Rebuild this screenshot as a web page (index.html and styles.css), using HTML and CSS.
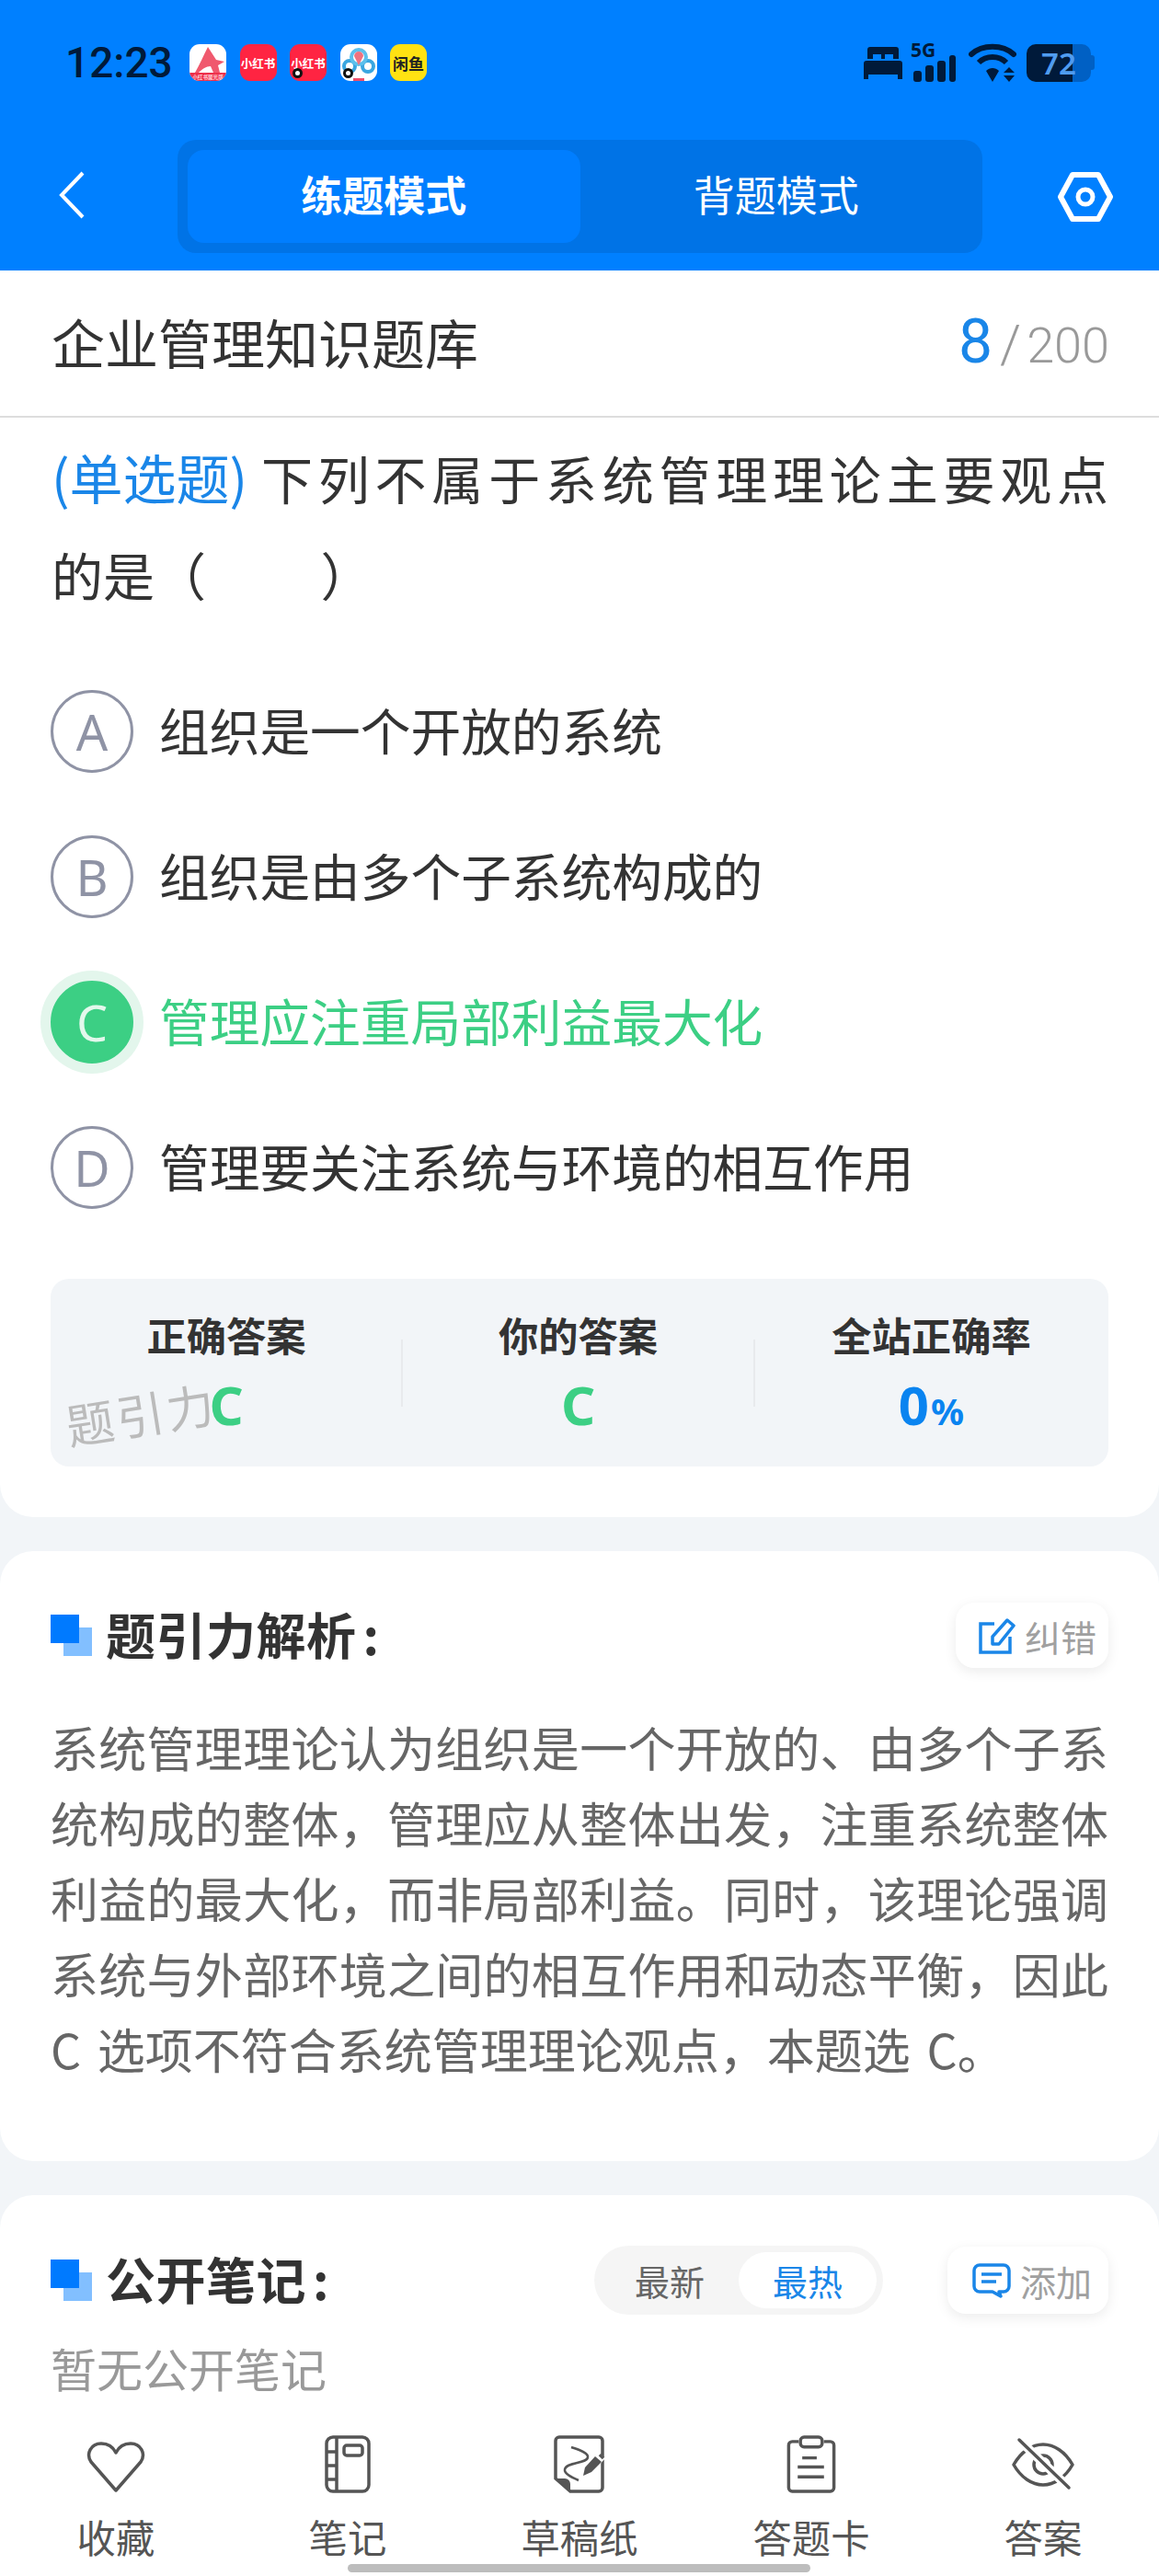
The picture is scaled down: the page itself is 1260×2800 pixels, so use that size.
FILE: index.html
```html
<!DOCTYPE html>
<html lang="zh-CN">
<head>
  <meta charset="UTF-8">
  <title>企业管理知识题库</title>
  <meta name="viewport" content="width=device-width, initial-scale=1.0">
  <link rel="stylesheet" href="styles.css">
</head>
<body>
  <div class="screen">
    <header class="top">
      <div class="status">
        <span class="time">12:23</span>
        <div class="apps">
          <div class="app app-white">
            <svg viewBox="0 0 40 40" width="40" height="40">
              <path d="M20 3L29 17L38 19L31 23L33 31H26L23 24C18 24 14 27 10 31H6C11 22 15 13 20 3z" fill="#f0596e"/>
              <rect x="0" y="31" width="40" height="9" fill="#ee2f4a"/>
              <text x="20" y="38" font-size="5.6" fill="#ffd0d6" text-anchor="middle">小红书聚光版</text>
            </svg>
          </div>
          <div class="app app-red">小红书</div>
          <div class="app app-red">小红书<i class="dot"></i></div>
          <div class="app app-white">
            <svg viewBox="0 0 40 40" width="40" height="40">
              <circle cx="10" cy="24" r="6" fill="none" stroke="#3aa6e0" stroke-width="4"/>
              <circle cx="30" cy="24" r="6" fill="none" stroke="#3aa6e0" stroke-width="4"/>
              <circle cx="20" cy="14" r="8" fill="none" stroke="#5cc0ec" stroke-width="4"/>
              <path d="M15 13a5 5 0 0 1 10 0l-5 10z" fill="#f0727f"/>
              <rect x="14" y="37" width="12" height="3" fill="#ee4d6a"/>
            </svg>
            <i class="dot"></i>
          </div>
          <div class="app app-yellow">闲鱼</div>
        </div>
        <div class="indicators">
          <svg class="ind-bed" viewBox="0 0 42 35" width="42" height="35">
            <path d="M7 0H35a3 3 0 0 1 3 3V13H32V8H23V13H19V8H10V13H4V3a3 3 0 0 1 3-3z" fill="#001a3a"/>
            <path d="M3 15H39a3 3 0 0 1 3 3V35H37V30H5V35H0V18a3 3 0 0 1 3-3z" fill="#001a3a"/>
          </svg>
          <div class="signal">
            <span class="five-g">5G</span>
            <svg viewBox="0 0 46 29" width="46" height="29">
              <rect x="0" y="17" width="9" height="12" rx="3" fill="#001a3a"/>
              <rect x="13" y="11" width="9" height="18" rx="3" fill="#001a3a"/>
              <rect x="26" y="6" width="9" height="23" rx="3" fill="#001a3a"/>
              <rect x="39" y="0" width="7" height="29" rx="3" fill="#001a3a"/>
            </svg>
          </div>
          <svg class="ind-wifi" viewBox="0 0 52 42" width="52" height="42">
            <path d="M3 12C15 1 37 1 49 12" fill="none" stroke="#001a3a" stroke-width="6" stroke-linecap="round"/>
            <path d="M11 21C19 13 33 13 41 21" fill="none" stroke="#001a3a" stroke-width="6"/>
            <path d="M19 30C23 26 29 26 33 30L26 42z" fill="#001a3a"/>
            <path d="M44 26L50 32H38z M38 35H50L44 42z" fill="#001a3a"/>
          </svg>
          <div class="battery">
            <div class="batt-fill"><span class="batt-num">72</span></div>
            <div class="batt-rest"></div>
            <div class="batt-nub"></div>
          </div>
        </div>
      </div>
      <nav class="nav">
        <svg class="back" viewBox="0 0 28 52" width="28" height="52">
          <path d="M26 2L3 26L26 50" fill="none" stroke="#fff" stroke-width="4"/>
        </svg>
        <div class="tabs">
          <div class="tab tab-on">练题模式</div>
          <div class="tab">背题模式</div>
        </div>
        <svg class="setting" viewBox="0 0 60 54" width="60" height="54">
          <path d="M16 3H44L57 27L44 51H16L3 27z" fill="none" stroke="#fff" stroke-width="6" stroke-linejoin="round"/>
          <circle cx="30" cy="27" r="8" fill="none" stroke="#fff" stroke-width="5"/>
        </svg>
      </nav>
    </header>

    <main class="content">
      <section class="card card-question">
        <div class="title-row">
          <h1 class="bank">企业管理知识题库</h1>
          <div class="count"><span class="count-now">8</span><span class="count-sep">/</span><span class="count-all">200</span></div>
        </div>
        <p class="question"><span class="q-first"><span class="q-type">(单选题)</span>下列不属于系统管理理论主要观点</span>的是（&emsp;&emsp;&nbsp;）</p>
        <ul class="options">
          <li class="option"><span class="letter">A</span><span class="opt-text">组织是一个开放的系统</span></li>
          <li class="option"><span class="letter">B</span><span class="opt-text">组织是由多个子系统构成的</span></li>
          <li class="option option-right"><span class="letter">C</span><span class="opt-text">管理应注重局部利益最大化</span></li>
          <li class="option"><span class="letter">D</span><span class="opt-text">管理要关注系统与环境的相互作用</span></li>
        </ul>
        <div class="stats">
          <div class="stat"><div class="stat-label">正确答案</div><div class="stat-val green">C</div></div>
          <div class="stat"><div class="stat-label">你的答案</div><div class="stat-val green">C</div></div>
          <div class="stat"><div class="stat-label">全站正确率</div><div class="stat-val blue">0<small>%</small></div></div>
          <div class="watermark">题引力</div>
        </div>
      </section>

      <section class="card card-analysis">
        <div class="sec-head">
          <h2 class="sec-title"><i class="squares"></i>题引力解析<span class="colon">:</span></h2>
          <div class="mini-btn">
            <svg viewBox="0 0 40 40" width="40" height="40">
              <path d="M17 7H2V38H34V21" fill="none" stroke="#1a86e8" stroke-width="3.5"/>
              <path d="M15 29V21L31 3L38 9L22 29z" fill="none" stroke="#1a86e8" stroke-width="3.5" stroke-linejoin="round"/>
            </svg>
            纠错
          </div>
        </div>
        <p class="analysis">系统管理理论认为组织是一个开放的、由多个子系统构成的整体，管理应从整体出发，注重系统整体利益的最大化，而非局部利益。同时，该理论强调系统与外部环境之间的相互作用和动态平衡，因此 C 选项不符合系统管理理论观点，本题选 C。</p>
      </section>

      <section class="card card-notes">
        <div class="sec-head sec-head-notes">
          <h2 class="sec-title"><i class="squares"></i>公开笔记<span class="colon">:</span></h2>
          <div class="sort">
            <span class="sort-item">最新</span>
            <span class="sort-item sort-on">最热</span>
          </div>
          <div class="mini-btn mini-btn-add">
            <svg viewBox="0 0 42 38" width="42" height="38">
              <path d="M8 2H34a6 6 0 0 1 6 6V25a6 6 0 0 1-6 6H29L31 36L22 31H8a6 6 0 0 1-6-6V8a6 6 0 0 1 6-6z" fill="none" stroke="#1a86e8" stroke-width="3.5" stroke-linejoin="round"/>
              <path d="M10 12H32M10 20H26" stroke="#1a86e8" stroke-width="3.5"/>
            </svg>
            添加
          </div>
        </div>
        <p class="empty">暂无公开笔记</p>
      </section>
    </main>

    <footer class="tools">
      <div class="tool">
        <svg viewBox="0 0 64 63" width="64" height="63">
          <path d="M32 60L5 29C-1 20 5 9 16 9C23 9 29 13 32 19C35 13 41 9 48 9C59 9 65 20 59 29z" fill="none" stroke="#555" stroke-width="3.5" stroke-linejoin="round"/>
        </svg>
        <span>收藏</span>
      </div>
      <div class="tool">
        <svg viewBox="0 0 50 63" width="50" height="63">
          <rect x="2" y="2" width="46" height="59" rx="7" fill="none" stroke="#555" stroke-width="3.5"/>
          <path d="M13 2V61M2 18H13M2 33H13M2 48H13" stroke="#555" stroke-width="3.5"/>
          <rect x="21" y="11" width="20" height="11" rx="3" fill="none" stroke="#555" stroke-width="3.5"/>
        </svg>
        <span>笔记</span>
      </div>
      <div class="tool">
        <svg viewBox="0 0 56 63" width="56" height="63">
          <path d="M6 2H49a4 4 0 0 1 4 4V57a4 4 0 0 1-4 4H18L2 47V6a4 4 0 0 1 4-4z" fill="none" stroke="#555" stroke-width="3.5"/>
          <path d="M2 47H12a6 6 0 0 1 6 6V61z" fill="#555"/>
          <path d="M19 13C28 16 38 19 37 24C36 31 14 29 12 37C11 42 20 46 27 49" fill="none" stroke="#555" stroke-width="2.5"/>
          <path d="M48 17L56 25L48 34z" fill="#fff"/>
          <path d="M32 44L34 35L45 23L52 29L41 40z" fill="#555"/>
          <path d="M50 21L54 25" stroke="#555" stroke-width="3.5"/>
        </svg>
        <span>草稿纸</span>
      </div>
      <div class="tool">
        <svg viewBox="0 0 54 64" width="54" height="64">
          <path d="M13 7H6a4 4 0 0 0-4 4V58a4 4 0 0 0 4 4H48a4 4 0 0 0 4-4V11a4 4 0 0 0-4-4H41" fill="none" stroke="#555" stroke-width="3.5"/>
          <rect x="15" y="2" width="24" height="11" rx="4" fill="none" stroke="#555" stroke-width="3.5"/>
          <path d="M17 25H33M12 35H41M12 46H41" stroke="#555" stroke-width="3.5"/>
        </svg>
        <span>答题卡</span>
      </div>
      <div class="tool">
        <svg viewBox="0 0 68 63" width="68" height="63">
          <path d="M2 32C10 18 22 10 34 10S58 18 66 32C58 46 46 54 34 54S10 46 2 32z" fill="none" stroke="#555" stroke-width="3.5" stroke-linejoin="round"/>
          <circle cx="34" cy="32" r="10" fill="none" stroke="#555" stroke-width="3.5"/>
          <path d="M8 5L62 57" stroke="#fff" stroke-width="10"/>
          <path d="M8 5L62 57" stroke="#555" stroke-width="3.5" stroke-linecap="round"/>
        </svg>
        <span>答案</span>
      </div>
      <div class="home-bar"></div>
    </footer>
  </div>
</body>
</html>
```

FILE: styles.css
```css
* { box-sizing:border-box; margin:0; padding:0; }
body { background:#f2f5f8; font-family:"Noto Sans CJK SC","Noto Sans",sans-serif; color:#333; }
.screen { width:1260px; height:2800px; display:flex; flex-direction:column; overflow:hidden; }

/* top blue area */
.top { background:#0080ff; height:294px; flex:none; }
.status { height:136px; display:flex; align-items:center; padding:0 70px 0 71px; }
.time { font-family:Roboto,sans-serif; font-size:46px; font-weight:500; color:#001a3a; width:135px; }
.apps { display:flex; gap:14.5px; }
.app { position:relative; width:40px; height:40px; border-radius:11px; overflow:hidden; display:flex; align-items:center; justify-content:center; font-size:12.5px; font-weight:700; }
.app-white { background:#fff; }
.app-red { background:#ff2442; color:#fff; overflow:visible; white-space:nowrap; }
.app-yellow { background:#ffe212; color:#222; font-size:17px; }
.dot { position:absolute; left:3px; bottom:3px; width:11px; height:11px; border-radius:50%; background:#fff; border:3px solid #111; }
.indicators { margin-left:auto; display:flex; align-items:center; }
.ind-bed { margin-right:12px; }
.signal { width:46px; height:42px; position:relative; display:flex; align-items:flex-end; margin-right:14px; }
.five-g { position:absolute; left:-3px; top:-3px; font-family:"Noto Sans",sans-serif; font-size:21px; line-height:21px; font-weight:700; color:#001a3a; }
.ind-wifi { margin-right:11px; }
.battery { display:flex; align-items:center; height:41px; }
.batt-fill { width:50px; height:41px; background:#001a3a; border-radius:10px 0 0 10px; position:relative; }
.batt-num { position:absolute; left:16px; top:0; font-family:"Noto Sans",sans-serif; font-size:33px; line-height:41px; font-weight:600; color:#4f9cf0; }
.batt-rest { width:20px; height:41px; background:#0060c4; border-radius:0 10px 10px 0; }
.batt-nub { width:4px; height:16px; background:#0060c4; border-radius:0 3px 3px 0; }

.nav { display:flex; align-items:center; padding:16px 0 19px 64px; height:158px; }
.back { flex:none; margin:0 101px 4px 0; }
.tabs { width:875px; height:123px; background:#0073e6; border-radius:20px; padding:11px; display:flex; }
.tab { flex:1; border-radius:18px; color:#fff; font-size:45px; padding-bottom:6px; display:flex; align-items:center; justify-content:center; }
.tab-on { background:#007eff; font-weight:700; }
.setting { flex:none; margin-left:82px; }

/* cards */
.content { flex:1; min-height:0; overflow:hidden; }
.card { background:#fff; border-radius:36px; margin-bottom:37px; }
.card-question { border-radius:0 0 36px 36px; padding-bottom:55px; }
.title-row { height:160px; border-bottom:2px solid #ddd; display:flex; align-items:center; justify-content:space-between; padding:0 54px 0 56px; }
.bank { font-size:58px; font-weight:400; padding-bottom:5px; }
.count { display:flex; align-items:baseline; font-family:Roboto,sans-serif; color:#999; font-size:54px; padding-bottom:3px; }
.count-now { color:#1a86e8; font-size:66px; }
.count-sep { margin:0 6px 0 8px; font-size:58px; font-weight:300; }
.count-all { font-weight:300; }

.question { margin:12px 55px 0 56px; font-size:56px; line-height:105px; }
.q-first { display:block; text-align:justify; text-align-last:justify; }
.q-type { color:#1a86e8; display:inline-block; font-size:58px; margin-right:9px; }

.options { list-style:none; margin:74px 0 0 55px; }
.option { display:flex; align-items:center; height:90px; margin-bottom:68px; font-size:54.7px; }
.option:last-child { margin-bottom:0; }
.opt-text { padding-bottom:5px; }
.letter { flex:none; width:90px; height:90px; margin-right:28px; border:3px solid #8f93a5; border-radius:50%; display:flex; align-items:center; justify-content:center; font-family:"Noto Sans",sans-serif; font-size:54px; font-weight:400; color:#8f93a5; }
.option-right { color:#3ccf84; }
.option-right .letter { background:#3ccf84; border-color:#3ccf84; color:#e3f8ec; box-shadow:0 0 0 11px #e3f6ec; }

.stats { position:relative; margin:76px 55px 0 55px; height:204px; background:#f2f5f8; border-radius:20px; display:grid; grid-template-columns:382px 383px 385px; padding-top:30px; }
.stat { position:relative; text-align:center; }
.stat + .stat::before { content:""; position:absolute; left:-1px; top:36px; width:2px; height:73px; background:#e8eaed; }
.stat-label { font-size:43.3px; line-height:60px; font-weight:700; }
.stat-val { font-family:"Noto Sans",sans-serif; font-size:58px; line-height:70px; font-weight:700; margin-top:12px; }
.stat-val small { font-size:40px; margin-left:2px; }
.green { color:#3ccf84; }
.blue { color:#0a84f0; }
.watermark { position:absolute; left:16px; top:116px; font-size:52px; line-height:60px; letter-spacing:3px; color:#bbb; transform:rotate(-9deg); }

.card-analysis { padding:56px 55px 81px; }
.sec-head { display:flex; align-items:center; justify-content:space-between; height:71px; }
.sec-title { display:flex; align-items:center; font-size:54px; font-weight:700; line-height:67px; padding-bottom:4px; letter-spacing:.5px; }
.colon { margin-left:7px; }
.squares { position:relative; width:45px; height:45px; margin:4px 15px 0 0; flex:none; }
.squares::before { content:""; position:absolute; left:14px; top:14px; width:31px; height:31px; background:#82bfff; }
.squares::after { content:""; position:absolute; left:0; top:0; width:31px; height:31px; background:#007aff; }
.mini-btn { display:flex; align-items:center; gap:10px; width:166px; height:71px; padding:0 0 0 25px; background:#fff; border-radius:20px; box-shadow:0 4px 14px rgba(0,0,0,.08); color:#a0a0a0; font-size:39px; flex:none; }
.mini-btn-add { width:175px; padding-left:27px; height:73px; }
.analysis { margin-top:45px; font-size:52px; line-height:82px; word-spacing:6px; color:#666; text-align:justify; }

.card-notes { padding:55px 55px 0; height:600px; }
.sec-head-notes { height:75px; }
.sec-head-notes .sec-title { margin-right:auto; }
.sort { width:314px; height:75px; margin-right:70px; padding:7px; background:#f5f5f5; border-radius:38px; display:flex; font-size:38px; color:#666; }
.sort-item { flex:none; width:150px; display:flex; align-items:center; justify-content:center; border-radius:31px; }
.sort-on { background:#fff; color:#1a86e8; }
.empty { margin-top:22px; font-size:50px; line-height:70px; color:#999; }

/* bottom tools */
.tools { position:relative; flex:none; height:183px; background:#fff; display:grid; grid-template-columns:repeat(5,1fr); padding-top:30px; margin-top:-4px; }
.tool { display:flex; flex-direction:column; align-items:center; font-size:42.4px; color:#555; }
.tool svg { height:63px; }
.tool span { margin-top:18px; line-height:58px; }
.home-bar { position:absolute; left:378px; top:170px; width:503px; height:9px; background:#bdbdbd; border-radius:5px; }
```
